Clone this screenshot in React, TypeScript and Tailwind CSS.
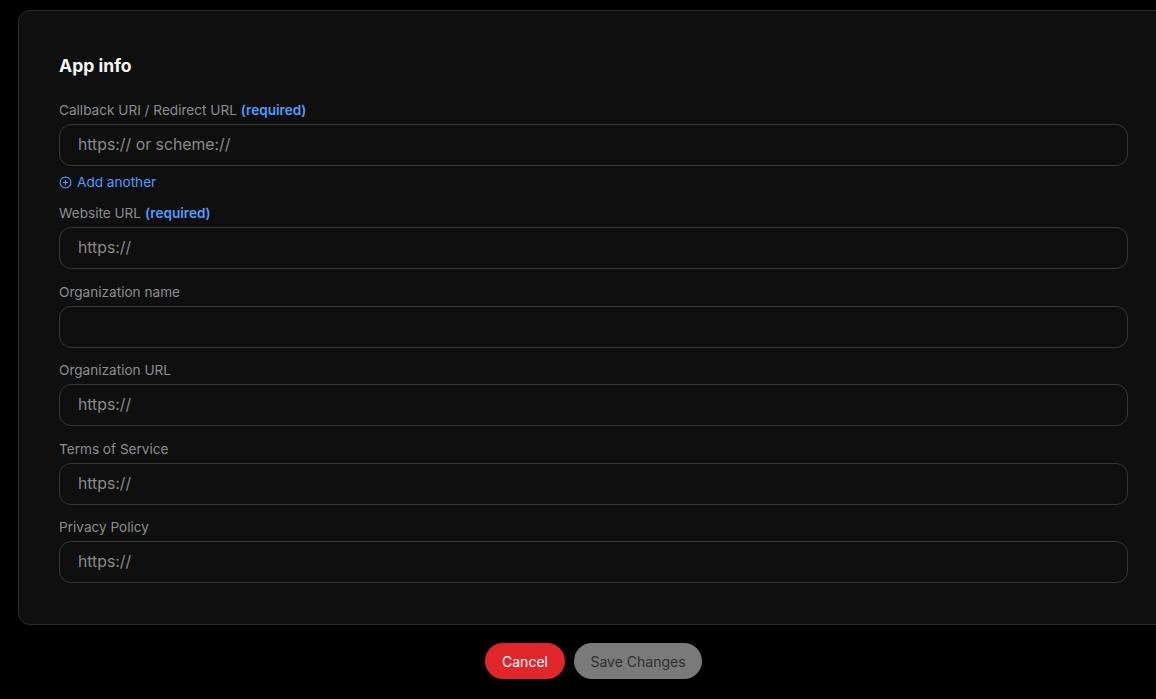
import React from "react";

const font = { fontFamily: "Inter, 'Noto Sans', sans-serif" };

function Field({
  label,
  required,
  placeholder,
  children,
}: {
  label: string;
  required?: boolean;
  placeholder?: string;
  children?: React.ReactNode;
}) {
  return (
    <div className="flex flex-col">
      <div className="h-5 text-[13.6px] leading-5 text-[#8b8e92] mb-[4px]">
        {label}
        {required && <span className="ml-1 font-semibold text-[#4f9dff]">(required)</span>}
      </div>
      <div className="h-[42px] rounded-[12px] border border-[#383838] bg-[#0f0f0f] flex items-center pl-[18px]">
        <span className="text-[15.8px] text-[#8a8a8a]">{placeholder}</span>
      </div>
      {children}
    </div>
  );
}

export default function App() {
  return (
    <div className="w-[1156px] h-[699px] overflow-hidden bg-black" style={font}>
      <div className="w-[1151px] ml-[18px] pt-[10px]">
        <div className="rounded-[12px] border border-[#2a2a2a] bg-[#0f0f0f] pl-[40px] pr-[40px] pt-[41px] pb-[41px]">
          <h2 className="text-[17.6px] leading-7 font-bold text-[#f5f5f5]">App info</h2>
          <div className="mt-[20px] flex flex-col">
            <Field label="Callback URI / Redirect URL" required placeholder="https:// or scheme://">
              <div className="mt-[6px] h-5 flex items-center gap-[5px] text-[13.6px] text-[#4f9dff]">
                <svg width="13" height="13" viewBox="0 0 24 24" fill="none" stroke="currentColor" strokeWidth="2" strokeLinecap="round">
                  <circle cx="12" cy="12" r="10" />
                  <path d="M12 8v8M8 12h8" />
                </svg>
                Add another
              </div>
            </Field>
            <div className="mt-[11px]">
              <Field label="Website URL" required placeholder="https://" />
            </div>
            <div className="mt-[12.5px]">
              <Field label="Organization name" />
            </div>
            <div className="mt-[12.5px]">
              <Field label="Organization URL" placeholder="https://" />
            </div>
            <div className="mt-[12.5px]">
              <Field label="Terms of Service" placeholder="https://" />
            </div>
            <div className="mt-[12.5px]">
              <Field label="Privacy Policy" placeholder="https://" />
            </div>
          </div>
        </div>
        <div className="mt-[18px] flex justify-center gap-[9px]">
          <button className="h-[36px] w-[80px] rounded-full bg-[#e0262a] text-white text-[14px]">Cancel</button>
          <button className="h-[36px] w-[128px] rounded-full bg-[#7a7a7a] text-[#2f2f2f] text-[14px]">Save Changes</button>
        </div>
      </div>
    </div>
  );
}
